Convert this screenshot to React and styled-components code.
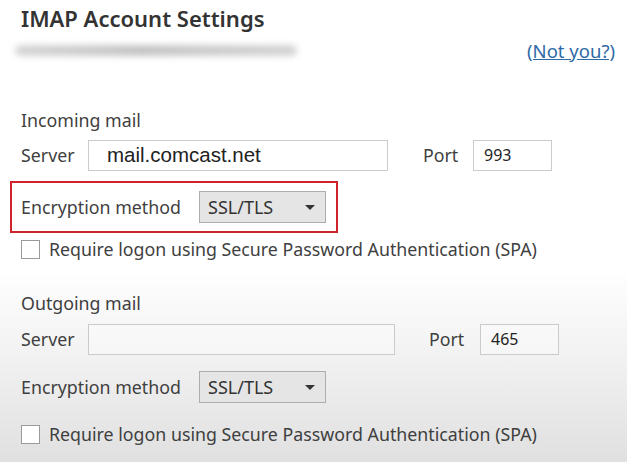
import React from 'react'
import styled, { createGlobalStyle } from 'styled-components'

const GlobalStyle = createGlobalStyle`
  html, body {
    margin: 0;
    padding: 0;
  }
  body {
    font-family: "Noto Sans", "Open Sans", sans-serif;
    color: #3f3f3f;
  }
`

const Page = styled.div`
  width: 627px;
  height: 462px;
  box-sizing: border-box;
  padding: 3px 12px 0 21px;
  overflow: hidden;
  background: linear-gradient(to bottom, #ffffff 0%, #ffffff 58%, #f1f1f1 78%, #e0e0e0 100%);
`

const Title = styled.h1`
  margin: 0;
  font-size: 22px;
  line-height: 30px;
  font-weight: 600;
  color: #333;
`

const AccountRow = styled.div`
  display: flex;
  align-items: center;
  justify-content: space-between;
  height: 24px;
  margin-top: 5px;
`

const BlurredEmail = styled.div`
  width: 282px;
  height: 11px;
  margin-left: -6px;
  border-radius: 6px;
  background: linear-gradient(to right, #d6d6d6, #c4c4c4 45%, #cdcdcd 70%, #d4d4d4);
  filter: blur(3px);
`

const NotYou = styled.a`
  font-size: 18.5px;
  color: #2f6aa5;
  text-decoration: underline;
  cursor: pointer;
`

const SectionHeading = styled.div`
  height: 22px;
  line-height: 22px;
  font-size: 17.8px;
  margin-top: ${p => p.$top}px;
`

const Row = styled.div`
  display: flex;
  align-items: center;
  height: 32px;
  margin-top: ${p => p.$top || 0}px;
`

const Label = styled.span`
  font-size: 17.8px;
  width: ${p => p.$width}px;
  flex-shrink: 0;
`

const TextBox = styled.div`
  box-sizing: border-box;
  width: ${p => p.$width}px;
  height: 31px;
  border: 1px solid #cbcbcb;
  background: ${p => (p.$muted ? 'rgba(255,255,255,0.35)' : '#fff')};
  display: flex;
  align-items: center;
  padding-left: ${p => p.$pad || 10}px;
  margin-right: ${p => p.$after || 0}px;
  font-family: ${p => (p.$arial ? '"Liberation Sans", Arial, sans-serif' : '"Noto Sans", sans-serif')};
  font-size: ${p => (p.$arial ? 20.5 : 16)}px;
  color: #222;
`

const Highlight = styled.div`
  box-sizing: border-box;
  width: 328px;
  height: 52px;
  margin: 10px 0 0 -11px;
  padding-left: 9px;
  border: 2px solid #d0222c;
  display: flex;
  align-items: center;
`

const Select = styled.div`
  box-sizing: border-box;
  width: 127px;
  height: 32px;
  border: 1px solid #adadad;
  background: #e5e5e5;
  display: flex;
  align-items: center;
  justify-content: space-between;
  padding: 0 10px 0 8px;
  font-size: 18px;
  color: #333;
`

const Arrow = styled.span`
  width: 0;
  height: 0;
  border-left: 5px solid transparent;
  border-right: 5px solid transparent;
  border-top: 5px solid #333;
`

const CheckRow = styled.label`
  display: flex;
  align-items: center;
  height: 22px;
  margin-top: ${p => p.$top}px;
  font-size: 17.8px;
`

const Box = styled.span`
  box-sizing: border-box;
  width: 19px;
  height: 19px;
  border: 1px solid #9a9a9a;
  background: #fff;
  margin-right: 9px;
  flex-shrink: 0;
`

const EncryptionRow = ({ top }) => (
  <Row $top={top}>
    <Label $width={178}>Encryption method</Label>
    <Select>
      SSL/TLS
      <Arrow />
    </Select>
  </Row>
)

const SpaCheck = ({ top }) => (
  <CheckRow $top={top}>
    <Box />
    Require logon using Secure Password Authentication (SPA)
  </CheckRow>
)

export default function App() {
  return (
    <>
      <GlobalStyle />
      <Page>
        <Title>IMAP Account Settings</Title>
        <AccountRow>
          <BlurredEmail />
          <NotYou>(Not you?)</NotYou>
        </AccountRow>

        <SectionHeading $top={47}>Incoming mail</SectionHeading>
        <Row $top={8}>
          <Label $width={67}>Server</Label>
          <TextBox $width={300} $pad={18} $arial $after={35}>mail.comcast.net</TextBox>
          <Label $width={50}>Port</Label>
          <TextBox $width={79}>993</TextBox>
        </Row>
        <Highlight>
          <Label $width={178}>Encryption method</Label>
          <Select>
            SSL/TLS
            <Arrow />
          </Select>
        </Highlight>
        <SpaCheck top={5} />

        <SectionHeading $top={32}>Outgoing mail</SectionHeading>
        <Row $top={9}>
          <Label $width={67}>Server</Label>
          <TextBox $width={307} $after={34} $muted />
          <Label $width={51}>Port</Label>
          <TextBox $width={79} $muted>465</TextBox>
        </Row>
        <EncryptionRow top={16} />
        <SpaCheck top={20} />
      </Page>
    </>
  )
}
